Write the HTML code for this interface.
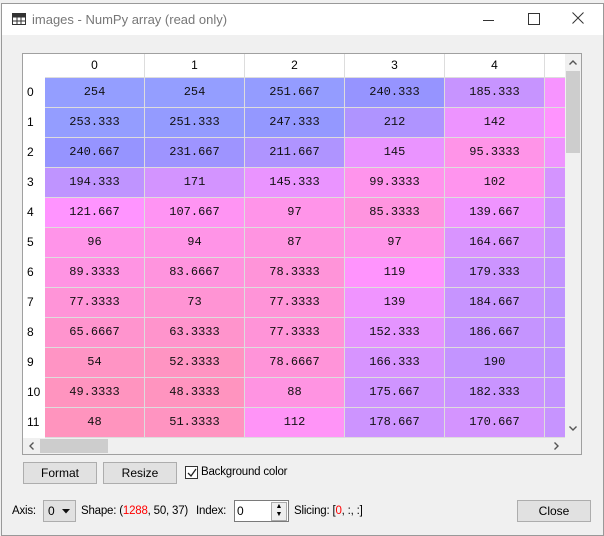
<!DOCTYPE html>
<html><head><meta charset="utf-8"><style>
body{margin:0;width:604px;height:535px;background:#f0f0f0;font-family:"Liberation Sans",sans-serif;font-size:12px;position:relative;overflow:hidden}
.win{position:absolute;left:1px;top:3px;width:601px;height:531px;background:#f0f0f0;border:1px solid #999}
.title{position:absolute;left:0;top:0;width:601px;height:31px;background:#fff}
.title span{position:absolute;left:30px;top:8px;font-size:13px;color:#777}
.frame{position:absolute;left:22px;top:53px;width:558px;height:400px;border:1px solid #a0a0a0;background:#fff;overflow:hidden}
.cell{position:absolute;height:29px;line-height:29px;text-align:center;font-family:"Liberation Mono",monospace;font-size:12px;color:#111;border-right:1px solid #ddd;border-bottom:1px solid #ddd}
.hd{position:absolute;text-align:center;color:#000;font-size:12px}
.btn{position:absolute;height:20px;border:1px solid #adadad;background:#e1e1e1;text-align:center;line-height:20px;font-size:12px}
.lbl{position:absolute;font-size:11.5px;letter-spacing:-0.2px}
</style></head><body>
<div class="win">
<div class="title">
<svg style="position:absolute;left:10px;top:9px" width="14" height="12"><rect x="0.5" y="0.5" width="13" height="11" fill="none" stroke="#333"/><path d="M0 4H14M0 8H14M5 0V12M9 0V12" stroke="#333"/><rect x="0" y="0" width="14" height="3.5" fill="#333"/></svg>
<span>images - NumPy array (read only)</span>
<div style="position:absolute;left:481px;top:16px;width:11px;height:1px;background:#333"></div>
<div style="position:absolute;left:526px;top:9px;width:10px;height:10px;border:1px solid #333"></div>
<svg style="position:absolute;left:570px;top:8px" width="12" height="12"><path d="M0.5 0.5L11.5 11.5M11.5 0.5L0.5 11.5" stroke="#333"/></svg>
</div>
</div>
<div class="frame" id="f"></div>
<div class="btn" style="left:23px;top:462px;width:72px">Format</div>
<div class="btn" style="left:103px;top:462px;width:72px">Resize</div>
<div style="position:absolute;left:185px;top:466px;width:11px;height:11px;border:1px solid #333;background:#fff"></div>
<svg style="position:absolute;left:186px;top:467px" width="12" height="12"><path d="M2 6L5 9L10 2" stroke="#222" fill="none" stroke-width="1.3"/></svg>
<div class="lbl" style="left:201px;top:466px">Background color</div>
<div class="lbl" style="left:12px;top:505px">Axis:</div>
<div style="position:absolute;left:43px;top:500px;width:31px;height:20px;border:1px solid #adadad;background:#e1e1e1"><span style="position:absolute;left:4px;top:3px">0</span><svg style="position:absolute;left:18px;top:8px" width="8" height="5"><path d="M0 0H8L4 4.5Z" fill="#111"/></svg></div>
<div class="lbl" style="left:81px;top:505px">Shape: (<span style="color:red">1288</span>, 50, 37)</div>
<div class="lbl" style="left:196px;top:505px">Index:</div>
<div style="position:absolute;left:234px;top:500px;width:53px;height:20px;border:1px solid #7a7a7a;background:#fff"><span style="position:absolute;left:2px;top:3px">0</span><div style="position:absolute;left:36px;top:1px;width:14px;height:17px;border:1px solid #aaa;background:#eee;font-size:7px;line-height:8px;text-align:center">▲<br>▼</div></div>
<div class="lbl" style="left:294px;top:505px">Slicing: [<span style="color:red">0</span>, :, :]</div>
<div class="btn" style="left:517px;top:500px;width:72px">Close</div>
<script>
var d=[[254,254,251.667,240.333,185.333,130],[253.333,251.333,247.333,212,142,120],[240.667,231.667,211.667,145,95.3333,140],[194.333,171,145.333,99.3333,102,170],[121.667,107.667,97,85.3333,139.667,180],[96,94,87,97,164.667,185],[89.3333,83.6667,78.3333,119,179.333,190],[77.3333,73,77.3333,139,184.667,195],[65.6667,63.3333,77.3333,152.333,186.667,195],[54,52.3333,78.6667,166.333,190,195],[49.3333,48.3333,88,175.667,182.333,190],[48,51.3333,112,178.667,170.667,185]];
function col(v){var h=(0.65+0.35*(255-v)/255)%1,s=0.42,V=1;var i=Math.floor(h*6),f=h*6-i,p=V*(1-s),q=V*(1-f*s),t=V*(1-(1-f)*s),r,g,b;
switch(i%6){case 0:r=V;g=t;b=p;break;case 1:r=q;g=V;b=p;break;case 2:r=p;g=V;b=t;break;case 3:r=p;g=q;b=V;break;case 4:r=t;g=p;b=V;break;default:r=V;g=p;b=q}
return "rgb("+Math.round(r*255)+","+Math.round(g*255)+","+Math.round(b*255)+")";}
var f=document.getElementById('f'),h='';
for(var c=0;c<6;c++){var x=22+c*100;h+='<div class="hd" style="left:'+x+'px;top:0;width:99px;height:23px;line-height:23px;border-right:1px solid #ddd;border-bottom:1px solid #ddd">'+(c<5?c:'')+'</div>';}
for(var r=0;r<12;r++){var y=24+r*30;h+='<div class="hd" style="left:4px;top:'+y+'px;height:29px;line-height:29px">'+r+'</div>';
for(var c=0;c<6;c++){var x=22+c*100;var v=d[r][c];h+='<div class="cell" style="left:'+x+'px;top:'+y+'px;width:99px;background:'+col(v)+'">'+(c<5?v:'')+'</div>';}}
var up='<svg width="8" height="5"><path d="M0.5 4.5L4 1L7.5 4.5" stroke="#555" fill="none" stroke-width="1.4"/></svg>';
var dn='<svg width="8" height="5"><path d="M0.5 0.5L4 4L7.5 0.5" stroke="#555" fill="none" stroke-width="1.4"/></svg>';
var lf='<svg width="5" height="8"><path d="M4.5 0.5L1 4L4.5 7.5" stroke="#555" fill="none" stroke-width="1.4"/></svg>';
var rt='<svg width="5" height="8"><path d="M0.5 0.5L4 4L0.5 7.5" stroke="#555" fill="none" stroke-width="1.4"/></svg>';
h+='<div style="position:absolute;left:542px;top:0;width:16px;height:384px;background:#f0f0f0"><div style="position:absolute;left:1px;top:17px;width:14px;height:82px;background:#cdcdcd"></div><div style="position:absolute;left:4px;top:6px;line-height:0">'+up+'</div><div style="position:absolute;left:4px;top:372px;line-height:0">'+dn+'</div></div>';
h+='<div style="position:absolute;left:0;top:384px;width:542px;height:16px;background:#f0f0f0"><div style="position:absolute;left:17px;top:1px;width:68px;height:14px;background:#cdcdcd"></div><div style="position:absolute;left:6px;top:4px;line-height:0">'+lf+'</div><div style="position:absolute;left:531px;top:4px;line-height:0">'+rt+'</div></div>';
h+='<div style="position:absolute;left:542px;top:384px;width:16px;height:16px;background:#f0f0f0"></div>';
f.innerHTML=h;
</script>
</body></html>
